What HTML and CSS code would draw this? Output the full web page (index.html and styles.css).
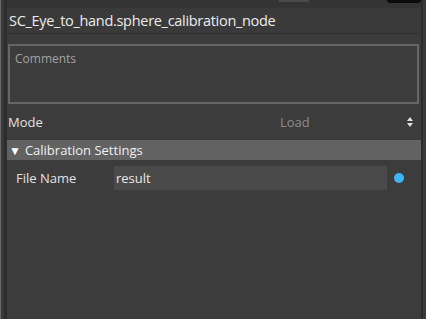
FILE: index.html
```html
<!DOCTYPE html>
<html>
<head>
  <title>Node Properties</title>
  <link rel="stylesheet" href="styles.css">
</head>
<body>

  <div class="window">
    <div class="rail-left"></div>

    <div class="panel">
      <div class="topstrip">
        <span class="tab-stub"></span>
        <span class="corner-stub"></span>
      </div>

      <div class="title">SC_Eye_to_hand.sphere_calibration_node</div>

      <div class="comments">
        <textarea placeholder="Comments"></textarea>
      </div>

      <div class="row mode-row">
        <span class="label">Mode</span>
        <span class="value">Load</span>
        <span class="spinner">
          <svg width="6" height="10" viewBox="0 0 6 10">
            <path d="M3 0 L6 4 L0 4 Z" fill="#e0e0e0"/>
            <path d="M0 6 L6 6 L3 10 Z" fill="#e0e0e0"/>
          </svg>
        </span>
      </div>

      <div class="section">
        <span class="arrow">&#9660;</span>
        <span>Calibration Settings</span>
      </div>

      <div class="row field-row">
        <span class="field-label">File Name</span>
        <input type="text" class="field-input" value="result">
        <span class="dot"></span>
      </div>
    </div>

    <div class="rail-right"></div>
  </div>

</body>
</html>
```

FILE: styles.css
```css
html, body {
  margin: 0;
  padding: 0;
}

body {
  width: 426px;
  height: 319px;
  overflow: hidden;
  background: #3b3b3b;
  font-family: "Open Sans", "Noto Sans", sans-serif;
  color: #e2e2e2;
}

.window {
  display: flex;
  height: 319px;
}

.rail-left {
  width: 4px;
  border-left: 1px solid #6a6a6a;
  background: #383838;
  border-right: 3px solid #2d2d2d;
}

.rail-right {
  width: 4px;
  border-left: 2px solid #2c2c2c;
  background: #3a3a3a;
}

.panel {
  flex: 1;
  display: flex;
  flex-direction: column;
  background: #3c3c3c;
}

.topstrip {
  height: 7px;
  background: #343434;
  display: flex;
  align-items: flex-start;
}

.tab-stub {
  margin-left: 272px;
  width: 30px;
  height: 2px;
  background: #4a4a4a;
}

.corner-stub {
  margin-left: 78px;
  width: 34px;
  height: 3px;
  background: #0c0c0c;
  border-radius: 0 0 6px 6px;
}

.title {
  height: 25px;
  line-height: 25px;
  padding-left: 2px;
  font-size: 14.5px;
  letter-spacing: -0.3px;
  color: #ececec;
  background: #3a3a3a;
  border-top: 1px solid #353535;
  border-bottom: 1px solid #2f2f2f;
}

.comments {
  padding: 10px 2px 0 1px;
}

.comments textarea {
  display: block;
  box-sizing: border-box;
  width: 100%;
  height: 60px;
  resize: none;
  background: #3c3c3c;
  border: 2px solid #666666;
  padding: 4px 5px;
  font-family: inherit;
  font-size: 12px;
  color: #dddddd;
  outline: none;
}

.comments textarea::placeholder {
  color: #a3a3a3;
}

.row {
  display: flex;
  align-items: center;
}

.mode-row {
  height: 20px;
  margin-top: 8px;
  padding-left: 1px;
  font-size: 13px;
}

.mode-row .label {
  width: 272px;
}

.mode-row .value {
  flex: 1;
  color: #8c8c8c;
}

.spinner {
  display: flex;
  margin-right: 8px;
}

.section {
  margin-top: 8px;
  height: 20px;
  display: flex;
  align-items: center;
  gap: 4px;
  padding-left: 2px;
  margin-right: -2px;
  background: #626262;
  font-size: 13px;
  color: #f0f0f0;
}

.section .arrow {
  font-size: 12px;
  color: #ffffff;
}

.field-row {
  margin-top: 6px;
  height: 24px;
  padding-left: 9px;
  font-size: 13px;
}

.field-label {
  width: 98px;
}

.field-input {
  box-sizing: border-box;
  width: 273px;
  height: 24px;
  border: none;
  background: #4a4a4a;
  padding: 0 2px;
  font-family: inherit;
  font-size: 13px;
  color: #e8e8e8;
  outline: none;
}

.dot {
  width: 10px;
  height: 10px;
  margin-left: 7px;
  border-radius: 50%;
  background: #3db5f7;
}
```
